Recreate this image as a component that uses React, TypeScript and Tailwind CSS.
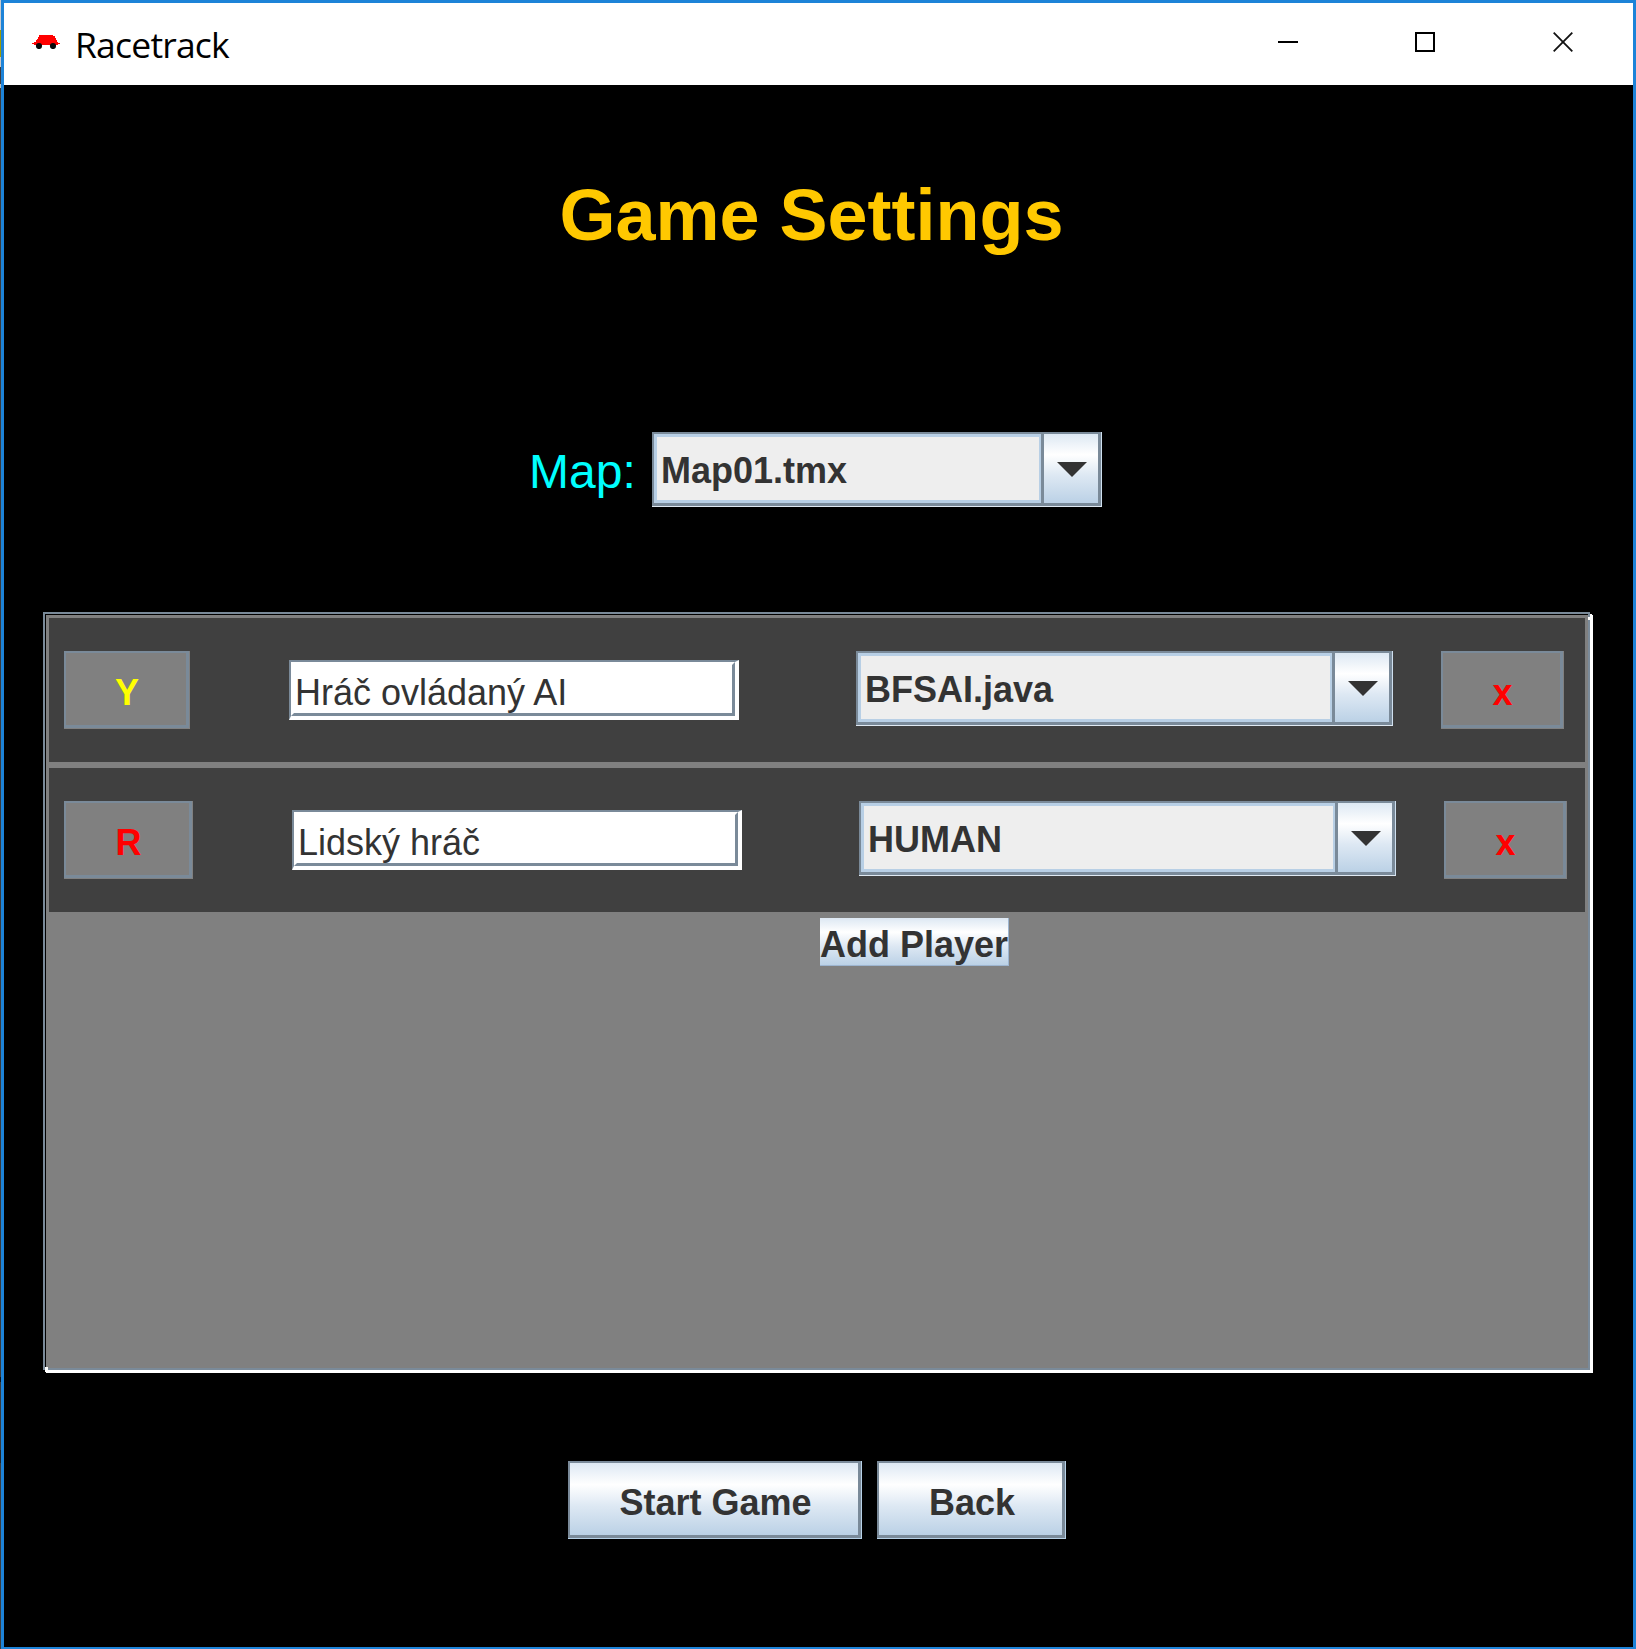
import React from "react";

const METAL =
  "bg-[linear-gradient(to_bottom,#dde8f3_0%,#ffffff_30%,#dde8f3_60%,#bbd1e6_100%)]";

function CarIcon() {
  return (
    <svg width="28" height="14" viewBox="0 0 28 14" className="block">
      <path d="M7 0H21V1H23V3H24V5H25V7H26V8H28V9H26V10H2V9H0V8H2V7H4V5H5V4H6V2H7Z" fill="#ff0000" />
      <circle cx="7" cy="11" r="3.1" fill="#080808" />
      <circle cx="21" cy="11" r="3.1" fill="#080808" />
    </svg>
  );
}

function TitleBar() {
  return (
    <header className="flex h-[82px] items-start bg-white">
      <div className="ml-[28px] mt-[32px]">
        <CarIcon />
      </div>
      <div className="ml-[15px] mt-[17px] font-['Open_Sans','Noto_Sans',sans-serif] text-[35.5px] leading-[48px] tracking-[-0.8px] text-black">
        Racetrack
      </div>
      <div className="ml-auto mr-[60px] mt-[29px] flex">
        <svg width="20" height="20" className="mr-[117px]">
          <rect x="0" y="9" width="20" height="2" fill="#000" />
        </svg>
        <svg width="20" height="20" className="mr-[118px]">
          <rect x="1" y="1" width="18" height="18" fill="none" stroke="#000" strokeWidth="2" />
        </svg>
        <svg width="20" height="20">
          <path d="M0.7 0.7L19.3 19.3M19.3 0.7L0.7 19.3" stroke="#111" strokeWidth="1.8" />
        </svg>
      </div>
    </header>
  );
}

function Combo({ value, className }: { value: string; className: string }) {
  return (
    <div className={`flex h-[75px] border-b border-r border-b-[#dfe9f3] border-r-[#cfe0f0] ${className}`}>
      <div className="flex flex-1 border-b-[3px] border-l-2 border-t-2 border-[#7a8a99]">
        <div className="flex-1 border-y-[3px] border-l-[3px] border-r-2 border-[#b8cfe5] bg-[#eeeeee] pl-[4px] pt-[13px] text-[36px] font-bold leading-[41px] text-[#333333]">
          {value}
        </div>
      </div>
      <div
        className={`flex w-[60px] justify-center border-x-[3px] border-b-[3px] border-t-2 border-[#7a8a99] pt-[28px] ${METAL}`}
      >
        <svg width="30" height="15" className="mr-[-2px] block">
          <path d="M0 0H30L15 15Z" fill="#333333" />
        </svg>
      </div>
    </div>
  );
}

function MetalButton({ label, className }: { label: string; className: string }) {
  return (
    <button className={`block h-[78px] border-b border-r border-[#b8d2e8] ${className}`}>
      <span
        className={`block h-[77px] border-b-[3px] border-l-2 border-r-[3px] border-t-2 border-[#7a8a99] pl-[3px] pt-[19px] text-[36px] font-bold leading-[41px] text-[#333333] ${METAL}`}
      >
        {label}
      </span>
    </button>
  );
}

function GrayButton({ label, className }: { label: string; className: string }) {
  return (
    <button className={`block h-[78px] border-b border-r border-[#808080] ${className}`}>
      <span className="block h-[77px] border-b-[3px] border-l-2 border-r-[3px] border-t-2 border-[#7a8a99] bg-[#808080] pl-[2px] pt-[19px] text-[36px] font-bold leading-[41px]">
        {label}
      </span>
    </button>
  );
}

function TextField({ value }: { value: string }) {
  return (
    <div className="ml-[99px] mt-[9px] h-[60px] w-[450px] border-b-4 border-l-2 border-r-4 border-t-2 border-b-white border-l-[#7a8a99] border-r-white border-t-[#7a8a99] bg-white">
      <div className="h-[54px] border-[3px] border-b-[#7a8a99] border-l-white border-r-[#7a8a99] border-t-white pl-[1px] pt-[7px] text-[36px] leading-[41px] text-[#333333]">
        {value}
      </div>
    </div>
  );
}

type Player = { mark: string; markClass: string; name: string; kind: string };

const players: Player[] = [
  { mark: "Y", markClass: "w-[126px] text-[#ffff00]", name: "Hráč ovládaný AI", kind: "BFSAI.java" },
  { mark: "R", markClass: "w-[129px] text-[#ff0000]", name: "Lidský hráč", kind: "HUMAN" },
];

function PlayerRow({ player }: { player: Player }) {
  return (
    <div className="flex h-[144px] items-start bg-[#404040] pl-[15px] pt-[33px]">
      <GrayButton label={player.mark} className={player.markClass} />
      <TextField value={player.name} />
      <Combo value={player.kind} className="ml-[117px] w-[537px]" />
      <GrayButton label="x" className="ml-[48px] w-[123px] text-[#ff0000]" />
    </div>
  );
}

export default function App() {
  return (
    <div className="flex h-[1649px] w-[1636px] overflow-hidden bg-black font-['Liberation_Sans',Arial,sans-serif]">
      <div className="w-px bg-[linear-gradient(to_bottom,#c8ccd0_0_30px,#a09c00_30px_57px,#c8c8c8_57px_67px,#3a3a40_67px_84px,#c0c0c0_84px_88px,#3a3a3a_88px_1377px,#111_1377px_1382px,#3a3a3a_1382px_1450px,#222_1450px_1463px,#3c3c3c_1463px)]" />
      <div className="flex w-[1635px] flex-col border-x-[3px] border-b-2 border-t-[3px] border-[#1d83d8] bg-black">
        <TitleBar />
        <h1 className="mb-px ml-[-14px] mt-[90px] text-center text-[72px] font-bold leading-[80px] text-[#ffc800]">
          Game Settings
        </h1>
        <div className="mt-[176px] flex h-[75px]">
          <div className="ml-[525px] mt-[13px] w-[123px] text-[48px] leading-[53px] text-[#00ffff]">Map:</div>
          <Combo value="Map01.tmx" className="w-[450px]" />
        </div>

        <section className="relative ml-[39px] mt-[105px] h-[758px] w-[1547px] border-2 border-[#7a8a99] shadow-[2px_2px_0_0_#fff,3px_3px_0_0_#fff]">
          <div className="flex h-[754px] flex-col gap-[6px] border-l border-t border-black bg-[#808080] pl-[3px] pr-[3px] pt-[3px]">
            {players.map((p) => (
              <PlayerRow key={p.mark} player={p} />
            ))}
            <button
              className={`ml-[771px] block h-[48px] w-[189px] whitespace-nowrap border-b border-r border-[#9db5d0] pt-[6px] text-left text-[36px] font-bold leading-[41px] text-[#333333] ${METAL}`}
            >
              Add Player
            </button>
          </div>
          <span className="absolute right-[-2px] top-[3px] h-[3px] w-[2px] bg-white" />
          <span className="absolute bottom-[-2px] left-0 h-[3px] w-[3px] bg-white" />
        </section>

        <div className="ml-[564px] mt-[91px] flex gap-[15px]">
          <MetalButton label="Start Game" className="w-[294px]" />
          <MetalButton label="Back" className="w-[189px]" />
        </div>
      </div>
    </div>
  );
}
